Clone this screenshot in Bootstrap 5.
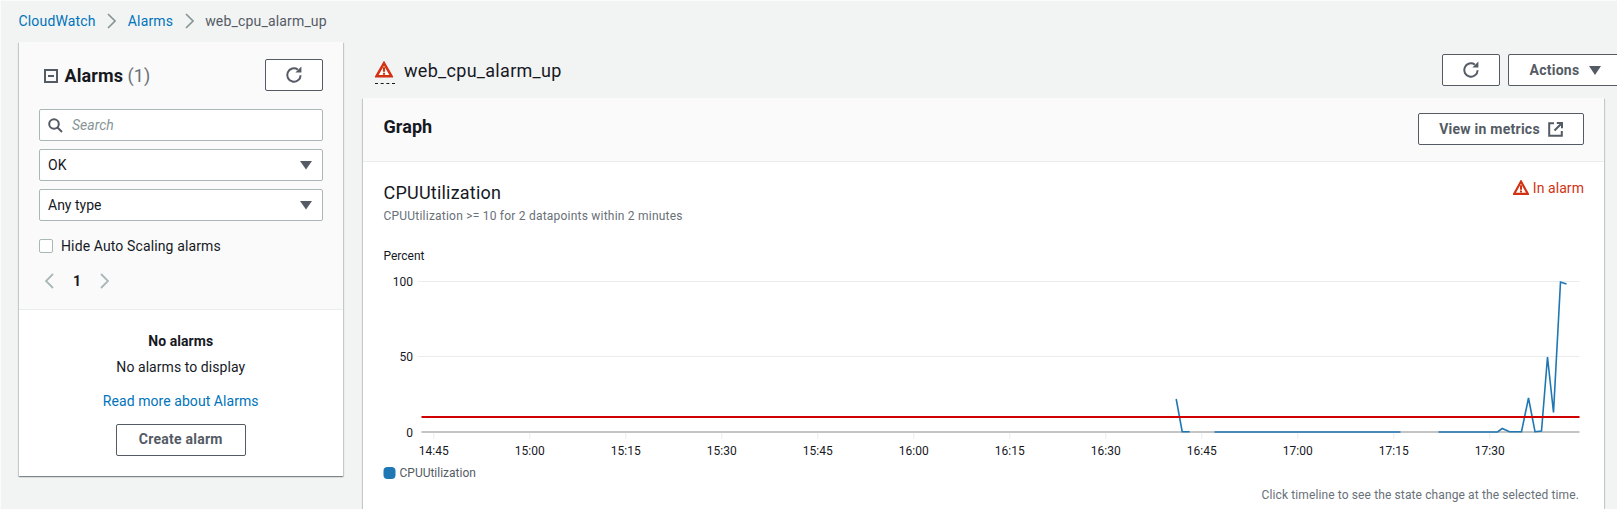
<!DOCTYPE html>
<html lang="en">
<head>
<meta charset="utf-8">
<title>web_cpu_alarm_up</title>
<link href="https://cdn.jsdelivr.net/npm/bootstrap@5.3.0/dist/css/bootstrap.min.css" rel="stylesheet">
<style>
html,body{height:509px;overflow:hidden}
body{background:#f2f3f3;color:#16191f;font-family:Roboto,"Liberation Sans",sans-serif;font-size:14px;line-height:20px;letter-spacing:.06px}
.page{height:509px;overflow:hidden;border-top:1px solid #fbfbfb;border-left:1px solid #fbfbfb;padding-left:17.5px}
.crumbs{height:41px;padding:0 0 2px 0;color:#545b64;gap:11.5px;font-size:14px;letter-spacing:.17px}
.crumbs a,.more{color:#0073bb;text-decoration:none}
.chev{width:9px;height:16px;flex:none}
.cols{display:grid;grid-template-columns:324.5px 1241.5px;column-gap:19.5px;align-items:start}
.side{background:#fff;box-shadow:0 1px 1px 0 rgba(0,28,36,.3),1px 1px 1px 0 rgba(0,28,36,.15),-1px 1px 1px 0 rgba(0,28,36,.15);height:434px}
.side-top{background:#fafafa;height:267.5px;padding:17px 20px 0 20.5px;border-bottom:1px solid #eaeded}
.side-head{height:32px;margin-bottom:18px}
.side-name{padding-left:5px}
.side-toggle{margin-top:2px;flex:none}
.side-title{font-size:18px;font-weight:700;margin-left:6.5px;letter-spacing:.1px;padding-top:2px}
.side-title span{font-weight:400;color:#687078}
.aws-btn{border:1px solid #545b64;border-radius:2px;background:#fff;color:#545b64;font-weight:700;font-size:14px;letter-spacing:.25px;padding:0;display:inline-flex;align-items:center;justify-content:center;gap:10px}
.aws-btn:hover{background:#fff;color:#545b64;border-color:#545b64}
.icon-btn{width:58px;height:32px}
.search-box{height:32px;background:#fff;border:1px solid #aab7b8;border-radius:2px;padding-left:8px;gap:9px;margin-bottom:8px}
.search-box input{border:0;outline:0;flex:1;min-width:0;font-size:14px;font-style:italic;color:#16191f;background:transparent;padding:0}
.search-box input::placeholder{color:#879596}
.pick{height:32px;border:1px solid #aab7b8;border-radius:2px;color:#16191f;font-size:14px;line-height:20px;padding:0 30px 0 8px;margin-bottom:8px;background-size:14px 10px;background-position:right 9px center;background-image:url("data:image/svg+xml,%3Csvg xmlns='http://www.w3.org/2000/svg' viewBox='0 0 14 10'%3E%3Cpath fill='%23545b64' d='M1 1h12L7 9.5z'/%3E%3C/svg%3E")}
.hide-row{margin-top:18px;gap:8px;height:14px;color:#16191f}
.hide-row .form-check-input{width:14px;height:14px;margin:0;border:1px solid #aab7b8;border-radius:2px;flex:none}
.hide-row label{color:#16191f;letter-spacing:.12px}
.pager{margin-top:20px;padding-left:6px;height:16px;font-weight:700;color:#16191f}
.pager .num{width:46px;text-align:center;font-size:14px}
.empty{padding-top:21px;text-align:center;line-height:20px}
.empty .t1{font-weight:700;margin-bottom:6px}
.empty .more{display:block;margin-top:14px;margin-bottom:13px}
.create{width:130px;height:32px}
.title-row{height:55.5px;padding:0 0 0 12.5px;align-items:flex-start}
.title-mark{width:20px;height:23px;margin-top:19px;border-bottom:1px dashed #16191f;flex:none}
.title-txt{font-size:18px;line-height:24px;margin:17px 0 0 9px;letter-spacing:.3px}
.top-btns{margin:12px -25px 0 0;gap:8px}
.act{width:121px;height:32px;border-right-color:transparent;gap:10px;padding-right:6px}
.main-card{background:#fff;box-shadow:0 1px 1px 0 rgba(0,28,36,.3),1px 1px 1px 0 rgba(0,28,36,.15),-1px 1px 1px 0 rgba(0,28,36,.15);height:420px}
.main-head{height:64.5px;background:#fafafa;border-bottom:1px solid #eaeded;padding:0 20px 0 21px}
.main-head h2{font-size:18px;font-weight:700;margin:-5px 0 0;line-height:24px}
.metrics{width:166px;height:32px;gap:8px}
.main-body{padding:18.5px 20px 0 0;position:relative}
.main-body h3{font-size:18px;font-weight:400;line-height:24px;margin:0 0 0 21px;letter-spacing:.22px}
.subline{font-size:12px;color:#687078;line-height:16px;margin:3px 0 0 21px;letter-spacing:.22px}
.alarm-state{color:#d13212;gap:4px;margin-top:-3px}
.chart{display:block;width:1241.5px;height:260px;margin-top:9px}
.chart text{font-family:Roboto,"Liberation Sans",sans-serif;font-size:12px;fill:#16191f;letter-spacing:0}
.hint{font-size:12px;line-height:16px;color:#687078;text-align:right;margin:-6px 5px 0 0;letter-spacing:.12px}
</style>
</head>
<body>
<div class="page">
  <nav class="crumbs d-flex align-items-center">
    <a href="#">CloudWatch</a>
    <svg class="chev" viewBox="0 0 9 16"><path d="M1 1l7 7-7 7" fill="none" stroke="#879596" stroke-width="1.6"/></svg>
    <a href="#">Alarms</a>
    <svg class="chev" viewBox="0 0 9 16"><path d="M1 1l7 7-7 7" fill="none" stroke="#879596" stroke-width="1.6"/></svg>
    <span>web_cpu_alarm_up</span>
  </nav>
  <div class="cols">
    <aside class="side">
      <div class="side-top">
        <div class="side-head d-flex align-items-center justify-content-between">
          <div class="side-name d-flex align-items-center">
            <svg width="14" height="14" viewBox="0 0 14 14" class="side-toggle"><rect x="1" y="1" width="12" height="12" fill="none" stroke="#545b64" stroke-width="2"/><path d="M4 7h6" stroke="#545b64" stroke-width="2"/></svg>
            <div class="side-title">Alarms <span>(1)</span></div>
          </div>
          <button class="btn aws-btn icon-btn" type="button" aria-label="Refresh">
            <svg width="18" height="18" viewBox="0 0 18 18"><path d="M15.6 9.2A6.7 6.7 0 1 1 12.8 3.6" fill="none" stroke="#545b64" stroke-width="2"/><path d="M10.4 6.6h6V.6z" fill="#545b64"/></svg>
          </button>
        </div>
        <div class="search-box d-flex align-items-center">
          <svg width="15" height="15" viewBox="0 0 15 15" class="flex-none"><circle cx="6" cy="6" r="4.8" fill="none" stroke="#545b64" stroke-width="2"/><path d="M9.5 9.5l4.5 4.5" stroke="#545b64" stroke-width="2"/></svg>
          <input type="text" placeholder="Search" aria-label="Search">
        </div>
        <select class="form-select pick" aria-label="State"><option>OK</option></select>
        <select class="form-select pick" aria-label="Type"><option>Any type</option></select>
        <div class="hide-row d-flex align-items-center">
          <input class="form-check-input" type="checkbox" id="hideas">
          <label for="hideas">Hide Auto Scaling alarms</label>
        </div>
        <div class="pager d-flex align-items-center">
          <svg width="9" height="16" viewBox="0 0 9 16"><path d="M8 1L1 8l7 7" fill="none" stroke="#aab7b8" stroke-width="1.8"/></svg>
          <span class="num">1</span>
          <svg width="9" height="16" viewBox="0 0 9 16"><path d="M1 1l7 7-7 7" fill="none" stroke="#aab7b8" stroke-width="1.8"/></svg>
        </div>
      </div>
      <div class="empty">
        <div class="t1">No alarms</div>
        <div>No alarms to display</div>
        <a class="more" href="#">Read more about Alarms</a>
        <button class="btn aws-btn create" type="button">Create alarm</button>
      </div>
    </aside>
    <main>
      <div class="title-row d-flex">
        <div class="title-mark">
          <svg width="18" height="17" viewBox="0 0 20 18" class="d-block"><path d="M10 2L1.6 16.5h16.8z" fill="#fff" stroke="#d13212" stroke-width="2.8" stroke-linejoin="miter"/><path d="M10 6.5v5M10 12.5v2.2" stroke="#d13212" stroke-width="2.4"/></svg>
        </div>
        <div class="title-txt">web_cpu_alarm_up</div>
        <div class="top-btns d-flex ms-auto">
          <button class="btn aws-btn icon-btn" type="button" aria-label="Refresh">
            <svg width="18" height="18" viewBox="0 0 18 18"><path d="M15.6 9.2A6.7 6.7 0 1 1 12.8 3.6" fill="none" stroke="#545b64" stroke-width="2"/><path d="M10.4 6.6h6V.6z" fill="#545b64"/></svg>
          </button>
          <button class="btn aws-btn act" type="button">Actions
            <svg width="12" height="9" viewBox="0 0 12 9"><path fill="#545b64" d="M0 0h12L6 9z"/></svg>
          </button>
        </div>
      </div>
      <section class="main-card">
        <div class="main-head d-flex align-items-center justify-content-between">
          <h2>Graph</h2>
          <button class="btn aws-btn metrics" type="button">View in metrics
            <svg width="15" height="15" viewBox="0 0 15 15"><path d="M6 1.2H1.2v12.6h12.6V9" fill="none" stroke="#545b64" stroke-width="2"/><path d="M6.5 8.5L13 2M8.8 1h5.2v5.2" fill="none" stroke="#545b64" stroke-width="2"/></svg>
          </button>
        </div>
        <div class="main-body">
          <div class="d-flex justify-content-between align-items-start">
            <div>
              <h3>CPUUtilization</h3>
              <div class="subline">CPUUtilization &gt;= 10 for 2 datapoints within 2 minutes</div>
            </div>
            <div class="alarm-state d-flex align-items-center">
              <svg width="16" height="15" viewBox="0 0 16 15"><path d="M8 1.5L1.2 13.8h13.6z" fill="#fff" stroke="#d13212" stroke-width="2.2"/><path d="M8 5.2v4.6M8 10.5v2" stroke="#d13212" stroke-width="2"/></svg>
              <span>In alarm</span>
            </div>
          </div>
          <svg class="chart" viewBox="0 0 1241.5 260" role="img" aria-label="CPUUtilization chart">
            <text x="20.5" y="27">Percent</text>
            <g stroke="#eaeded" stroke-width="1">
              <path d="M54.5 48.5H1216.5M54.5 123.5H1216.5"/>
            </g>
            <g text-anchor="end">
              <text x="50" y="53">100</text>
              <text x="50" y="128">50</text>
              <text x="50" y="204">0</text>
            </g>
            <path d="M58.5 199H1216.5" stroke="#c4c4c4" stroke-width="2"/>
            <path d="M70.8 200V206M166.8 200V206M262.8 200V206M358.8 200V206M454.8 200V206M550.8 200V206M646.8 200V206M742.8 200V206M838.8 200V206M934.8 200V206M1030.8 200V206M1126.8 200V206" stroke="#eaeded" stroke-width="1"/>
            <g text-anchor="middle">
              <text x="70.8" y="222">14:45</text>
              <text x="166.8" y="222">15:00</text>
              <text x="262.8" y="222">15:15</text>
              <text x="358.8" y="222">15:30</text>
              <text x="454.8" y="222">15:45</text>
              <text x="550.8" y="222">16:00</text>
              <text x="646.8" y="222">16:15</text>
              <text x="742.8" y="222">16:30</text>
              <text x="838.8" y="222">16:45</text>
              <text x="934.8" y="222">17:00</text>
              <text x="1030.8" y="222">17:15</text>
              <text x="1126.8" y="222">17:30</text>
            </g>
            <g fill="none" stroke="#1f77b4" stroke-width="1.6" stroke-linejoin="miter">
              <path d="M813.2 166L819.2 198.7H826.7"/>
              <path d="M851.5 199H1037.5" stroke="#4a89b8" stroke-width="2"/>
              <path d="M1075.5 199H1134.5L1139.2 195.5L1146.5 198.7H1158.5L1165.5 165L1172 198.7L1178.5 198L1184.5 124L1190.5 179.5L1197.5 49L1203.5 51"/>
            </g>
            <path d="M58.5 184H1216.5" stroke="#d10000" stroke-width="2"/>
            <rect x="20.5" y="234" width="12" height="12" rx="4" fill="#1f77b4"/>
            <text x="36.5" y="244" style="fill:#545b64">CPUUtilization</text>
          </svg>
          <div class="hint">Click timeline to see the state change at the selected time.</div>
        </div>
      </section>
    </main>
  </div>
</div>
<script src="https://cdn.jsdelivr.net/npm/bootstrap@5.3.0/dist/js/bootstrap.bundle.min.js"></script>
</body>
</html>
